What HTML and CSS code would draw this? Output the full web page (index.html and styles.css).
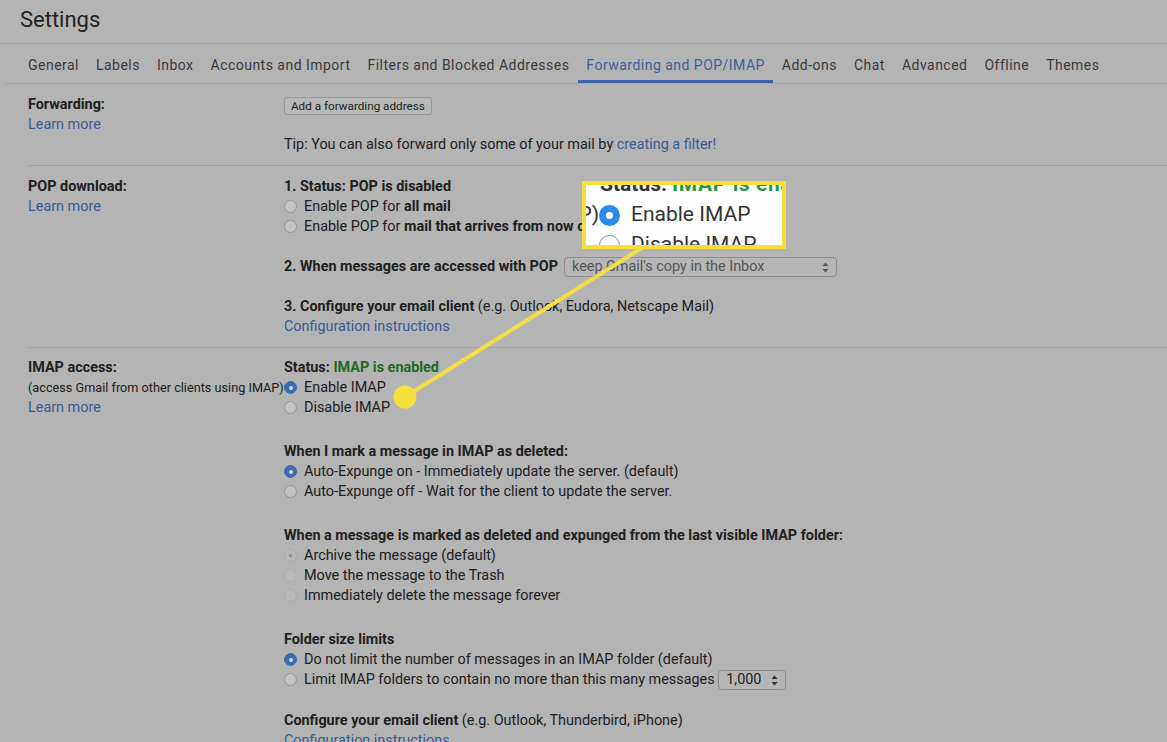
FILE: index.html
```html
<!DOCTYPE html>
<html lang="en">
<head>
<meta charset="utf-8">
<title>Settings - Forwarding and POP/IMAP</title>
<link rel="stylesheet" href="styles.css">
</head>
<body>
<div class="page">
  <header class="title">Settings</header>
  <nav class="tabs">
    <a class="tab">General</a>
    <a class="tab">Labels</a>
    <a class="tab">Inbox</a>
    <a class="tab">Accounts and Import</a>
    <a class="tab">Filters and Blocked Addresses</a>
    <a class="tab active">Forwarding and POP/IMAP</a>
    <a class="tab">Add-ons</a>
    <a class="tab">Chat</a>
    <a class="tab">Advanced</a>
    <a class="tab">Offline</a>
    <a class="tab">Themes</a>
  </nav>

  <main class="settings">
    <section class="row">
      <div class="label">
        <div class="label-title">Forwarding:</div>
        <a class="link">Learn more</a>
      </div>
      <div class="content">
        <div class="line"><button class="btn">Add a forwarding address</button></div>
        <div class="line gap">Tip: You can also forward only some of your mail by <a class="link">creating a filter!</a></div>
      </div>
    </section>

    <section class="row">
      <div class="label">
        <div class="label-title">POP download:</div>
        <a class="link">Learn more</a>
      </div>
      <div class="content">
        <div class="block">
          <div class="line b">1. Status: POP is disabled</div>
          <label class="opt"><input type="radio" name="pop" class="radio">Enable POP for <b>all mail</b></label>
          <label class="opt"><input type="radio" name="pop" class="radio">Enable POP for <b>mail that arrives from now on</b></label>
        </div>
        <div class="block">
          <div class="line sel-line"><b>2. When messages are accessed with POP</b>
            <span class="select wide"><span class="sel-text muted">keep Gmail's copy in the Inbox</span>
              <svg class="arrows" viewBox="0 0 7 11" width="7" height="11"><path d="M3.5 0.5 L6.5 4 L0.5 4 Z M3.5 10.5 L6.5 7 L0.5 7 Z" fill="#555"/></svg>
            </span>
          </div>
        </div>
        <div class="block last">
          <div class="line"><b>3. Configure your email client</b> (e.g. Outlook, Eudora, Netscape Mail)</div>
          <div class="line"><a class="link">Configuration instructions</a></div>
        </div>
      </div>
    </section>

    <section class="row imap">
      <div class="label">
        <div class="label-title">IMAP access:</div>
        <div class="label-note">(access Gmail from other clients using IMAP)</div>
        <a class="link">Learn more</a>
      </div>
      <div class="content">
        <div class="block">
          <div class="line b">Status: <span class="ok">IMAP is enabled</span></div>
          <label class="opt"><input type="radio" name="imap" class="radio" checked>Enable IMAP</label>
          <label class="opt"><input type="radio" name="imap" class="radio">Disable IMAP</label>
        </div>
        <div class="block">
          <div class="line b">When I mark a message in IMAP as deleted:</div>
          <label class="opt"><input type="radio" name="exp" class="radio" checked>Auto-Expunge on - Immediately update the server. (default)</label>
          <label class="opt"><input type="radio" name="exp" class="radio">Auto-Expunge off - Wait for the client to update the server.</label>
        </div>
        <div class="block">
          <div class="line b">When a message is marked as deleted and expunged from the last visible IMAP folder:</div>
          <label class="opt"><input type="radio" name="del" class="radio" checked disabled>Archive the message (default)</label>
          <label class="opt"><input type="radio" name="del" class="radio" disabled>Move the message to the Trash</label>
          <label class="opt"><input type="radio" name="del" class="radio" disabled>Immediately delete the message forever</label>
        </div>
        <div class="block short">
          <div class="line b">Folder size limits</div>
          <label class="opt"><input type="radio" name="lim" class="radio" checked>Do not limit the number of messages in an IMAP folder (default)</label>
          <label class="opt"><input type="radio" name="lim" class="radio">Limit IMAP folders to contain no more than this many messages <span class="select small"><span class="sel-text">1,000</span><svg class="arrows" viewBox="0 0 7 11" width="7" height="11"><path d="M3.5 0.5 L6.5 4 L0.5 4 Z M3.5 10.5 L6.5 7 L0.5 7 Z" fill="#333"/></svg></span></label>
        </div>
        <div class="block last">
          <div class="line"><b>Configure your email client</b> (e.g. Outlook, Thunderbird, iPhone)</div>
          <div class="line"><a class="link">Configuration instructions</a></div>
        </div>
      </div>
    </section>
  </main>

  <svg class="pointer" width="1167" height="742" viewBox="0 0 1167 742">
    <line x1="645" y1="246" x2="405" y2="397" stroke="#f3de48" stroke-width="4" stroke-linecap="round"/>
    <circle cx="405" cy="397" r="11.5" fill="#f6e03e"/>
  </svg>

  <div class="callout">
    <div class="zoom">
      <div class="z-line b">Status: <span class="z-ok">IMAP is enabled</span></div>
      <div class="z-line z-opt"><span class="cut"><span>other clients using IMAP)</span></span><span class="z-radio on"></span>Enable IMAP</div>
      <div class="z-line z-opt"><span class="cut"></span><span class="z-radio"></span>Disable IMAP</div>
    </div>
  </div>
</div>
</body>
</html>
```

FILE: styles.css
```css
html, body {
  margin: 0;
  padding: 0;
}
body {
  background: #b4b4b4;
  font-family: Roboto, "Liberation Sans", Arial, sans-serif;
  font-size: 14.4px;
  color: #202020;
}
.page {
  position: relative;
  width: 1167px;
  height: 742px;
  overflow: hidden;
}
.title {
  height: 44px;
  box-sizing: border-box;
  padding: 6px 0 0 20px;
  font-size: 22px;
  line-height: 28px;
  color: #222;
  border-bottom: 1px solid #a6a6a6;
}
.tabs {
  display: flex;
  gap: 1px;
  height: 40px;
  box-sizing: border-box;
  margin-left: 4px;
  padding-left: 16px;
  border-bottom: 1px solid #a6a6a6;
}
.tab {
  display: block;
  padding: 3px 8px 0;
  line-height: 36px;
  height: 39px;
  box-sizing: border-box;
  color: #3a3a3a;
  font-size: 14px;
  letter-spacing: 0.48px;
  white-space: nowrap;
}
.tab.active {
  color: #3d5f9b;
  border-bottom: 3px solid #3c63a5;
}
.settings {
  line-height: 20px;
}
.row {
  display: grid;
  grid-template-columns: 256px 1fr;
  margin-left: 28px;
  padding: 11px 0 10px;
  border-bottom: 1px solid #a4a4a4;
}
.row.imap {
  padding-top: 10px;
}
.label-title {
  font-weight: bold;
}
.label-note {
  font-size: 12.7px;
  white-space: nowrap;
}
.link {
  color: #3b5a95;
  cursor: pointer;
}
.line {
  display: block;
  white-space: nowrap;
}
.line.gap {
  margin-top: 20px;
}
.b {
  font-weight: bold;
}
.ok {
  color: #1e6b20;
}
.block {
  margin-bottom: 20px;
}
.block.last {
  margin-bottom: 0;
}
.imap .block {
  margin-bottom: 24px;
}
.imap .block.short {
  margin-bottom: 21px;
}
.imap .block.last {
  margin-bottom: 0;
}
.sel-line {
  height: 20px;
  display: flex;
  align-items: flex-start;
}
.btn {
  font-family: Roboto, "Liberation Sans", Arial, sans-serif;
  font-size: 11.7px;
  height: 18px;
  padding: 0 6px;
  line-height: 16px;
  color: #222;
  background: #b9b9b9;
  border: 1px solid #999;
  border-radius: 3px;
  vertical-align: middle;
  margin-top: 1px;
}
.opt {
  display: block;
  height: 20px;
  white-space: nowrap;
}
.radio {
  appearance: none;
  -webkit-appearance: none;
  display: inline-block;
  vertical-align: -2px;
  width: 13px;
  height: 13px;
  margin: 0 7px 0 0;
  border-radius: 50%;
  border: 1px solid #969696;
  background: #c3c3c3;
  box-sizing: border-box;
  position: relative;
}
.radio:checked {
  border-color: #3c6db3;
  background: #3c6db3;
}
.radio:checked::after {
  content: "";
  position: absolute;
  left: 50%;
  top: 50%;
  width: 4px;
  height: 4px;
  margin: -2px 0 0 -2px;
  border-radius: 50%;
  background: #d8d8d8;
}
.radio:disabled {
  border-color: #acacac;
  background: #b9b9b9;
}
.radio:disabled:checked::after {
  background: #8e8e8e;
  width: 3px;
  height: 3px;
  margin: -1.5px 0 0 -1.5px;
}
.select {
  display: inline-flex;
  align-items: center;
  justify-content: space-between;
  box-sizing: border-box;
  height: 20px;
  border: 1px solid #8c8c8c;
  border-radius: 4px;
  padding: 0 7px;
  font-weight: normal;
  background: #b6b6b6;
  vertical-align: middle;
}
.select.wide {
  width: 273px;
  margin-left: 6px;
}
.select.small {
  width: 68px;
  margin-left: 0;
  line-height: 18px;
}
.sel-text.muted {
  color: #555;
}
.arrows {
  display: block;
}

/* pointer and magnified callout */
.pointer {
  position: absolute;
  left: 0;
  top: 0;
  pointer-events: none;
}
.callout {
  position: absolute;
  left: 582px;
  top: 181px;
  width: 204px;
  height: 68px;
  box-sizing: border-box;
  border: 4px solid #f4de3b;
  background: #fefefe;
  overflow: hidden;
}
.zoom {
  margin-top: -16px;
  padding-left: 14px;
  font-size: 21px;
  line-height: 30px;
  color: #333;
  white-space: nowrap;
}
.z-ok {
  color: #1f9a3c;
  letter-spacing: 0.6px;
}
.z-opt {
  display: flex;
  align-items: center;
  margin-left: -14px;
}
.cut {
  display: flex;
  justify-content: flex-end;
  width: 13px;
  overflow: hidden;
  flex: none;
  color: #333;
}
.cut span {
  flex: none;
}
.z-radio {
  width: 21px;
  height: 21px;
  border-radius: 50%;
  box-sizing: border-box;
  border: 1.5px solid #8a8a8a;
  background: #fff;
  margin: 2px 11px 0 0;
  flex: none;
  position: relative;
}
.z-radio.on {
  border: none;
  background: #2c8be8;
}
.z-radio.on::after {
  content: "";
  position: absolute;
  left: 50%;
  top: 50%;
  width: 7px;
  height: 7px;
  margin: -3.5px 0 0 -3.5px;
  border-radius: 50%;
  background: #fff;
}
```
